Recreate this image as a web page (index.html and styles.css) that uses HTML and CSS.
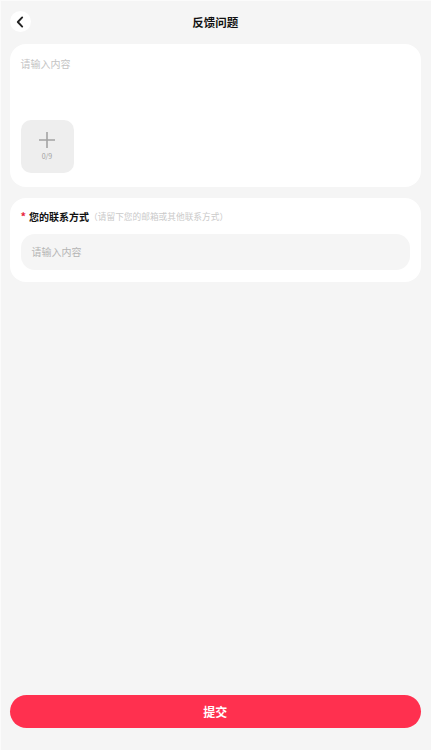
FILE: index.html
```html
<!DOCTYPE html>
<html lang="zh-CN">
<head>
    <meta charset="UTF-8">
    <meta name="viewport" content="width=device-width, initial-scale=1.0">
    <title>反馈问题</title>
    <link rel="stylesheet" href="styles.css">
</head>
<body>
    <div class="page">
        <header class="nav">
            <button class="back-btn" type="button" aria-label="返回">
                <svg width="8" height="12" viewBox="0 0 8 12"><path d="M6.2 1.4 1.8 6l4.4 4.6" fill="none" stroke="#222" stroke-width="1.9" stroke-linecap="round" stroke-linejoin="round"/></svg>
            </button>
            <h1>反馈问题</h1>
        </header>

        <section class="card feedback-card">
            <div class="placeholder">请输入内容</div>
            <div class="upload">
                <svg width="16" height="16" viewBox="0 0 16 16"><path d="M8 0v16M0 8h16" stroke="#a3a3a3" stroke-width="1.6"/></svg>
                <span>0/9</span>
            </div>
        </section>

        <section class="card contact-card">
            <div class="contact-label">
                <span class="star">*</span>
                <span class="label-text">您的联系方式</span>
                <span class="label-tip">（请留下您的邮箱或其他联系方式）</span>
            </div>
            <div class="contact-input">请输入内容</div>
        </section>

        <button class="submit" type="button">提交</button>
    </div>
</body>
</html>
```

FILE: styles.css
```css
* {
    margin: 0;
    padding: 0;
    box-sizing: border-box;
    font-family: "Noto Sans CJK SC", "Noto Sans", sans-serif;
}

body {
    background: #f5f5f5;
}

.page {
    display: flex;
    flex-direction: column;
    height: 750px;
    padding: 0 10px 22px 8.5px;
    border-top: 1px solid #fbfbfb;
    border-left: 1px solid #fbfbfb;
}

.nav {
    position: relative;
    display: flex;
    justify-content: center;
    align-items: center;
    height: 43px;
    flex-shrink: 0;
}

.nav h1 {
    font-size: 11.5px;
    font-weight: 700;
    color: #111;
    line-height: 39px;
}

.back-btn {
    position: absolute;
    left: 0;
    top: 10px;
    display: flex;
    justify-content: center;
    align-items: center;
    width: 21px;
    height: 21px;
    border: none;
    border-radius: 50%;
    background: #fff;
}

.card {
    background: #fff;
    border-radius: 16px;
    padding: 0 11px;
}

.feedback-card {
    display: flex;
    flex-direction: column;
    height: 143px;
    padding-top: 12px;
}

.placeholder {
    font-size: 10px;
    line-height: 15px;
    color: #c4c4c4;
}

.upload {
    display: flex;
    flex-direction: column;
    align-items: center;
    width: 53px;
    height: 53px;
    margin-top: auto;
    margin-bottom: 14px;
    padding-top: 12px;
    border-radius: 10px;
    background: #eeeeee;
}

.upload span {
    font-size: 7px;
    line-height: 10px;
    margin-top: 3px;
    color: #a0a0a0;
}

.contact-card {
    height: 84px;
    margin-top: 11px;
    padding-top: 11px;
}

.contact-label {
    display: flex;
    align-items: center;
    height: 14px;
}

.star {
    font-size: 11px;
    font-weight: 700;
    color: #e8263f;
    margin-right: 3px;
}

.label-text {
    font-size: 10px;
    font-weight: 700;
    color: #111;
}

.label-tip {
    font-size: 8.7px;
    color: #cacaca;
}

.contact-input {
    height: 36px;
    margin-top: 11px;
    padding-left: 11px;
    border-radius: 14px;
    background: #f5f5f5;
    font-size: 10px;
    line-height: 36px;
    color: #b4b4b4;
}

.submit {
    flex-shrink: 0;
    width: 100%;
    height: 33px;
    margin-top: auto;
    border: none;
    border-radius: 17px;
    background: #ff304f;
    color: #fff;
    font-size: 12px;
    font-weight: 700;
}
```
